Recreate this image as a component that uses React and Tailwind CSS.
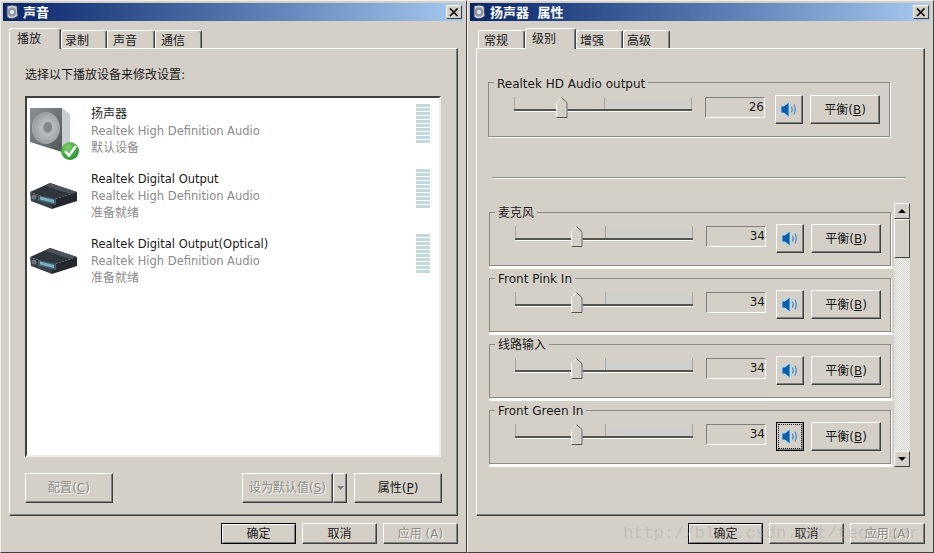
const FONT = "font-['DejaVu_Sans','Noto_Sans_CJK_SC',sans-serif]";

function Raised({ className = '', children }) {
  return (
    <div className={`flex items-center justify-center border border-t-white border-l-white border-r-[#404040] border-b-[#404040] shadow-[inset_-1px_-1px_0_#808080] ${className}`}>
      {children}
    </div>
  );
}

function Label({ text, hot, disabled }) {
  // disabled captions are grey with a white emboss
  const color = disabled ? 'text-[#8c8a84] [text-shadow:1px_1px_0_#fff]' : 'text-[#1a1a1a]';
  return (
    <span className={`text-[12px] leading-none ${color}`}>
      {text}
      {hot && (
        <>
          (<span className="underline">{hot}</span>)
        </>
      )}
    </span>
  );
}

function TitleIcon() {
  return (
    <svg width="15" height="16" viewBox="0 0 15 16">
      <path d="M2 2 Q7 0 12 2 L13 12 Q7 17 2 13 Z" fill="#c9ced6" stroke="#39435c" />
      <circle cx="7" cy="8" r="4.5" fill="#8f97a3" />
      <circle cx="7" cy="8" r="2" fill="#e6e9ee" />
    </svg>
  );
}

function TitleBar({ title, icon }) {
  return (
    <div className="flex h-[18px] w-[460px] items-center bg-linear-to-r from-[#0a246a] to-[#a6caf0] pl-[2px] pr-[1px]">
      {icon}
      <span className="ml-[3px] text-[13px] leading-none font-bold text-white [word-spacing:4px]">{title}</span>
      <div className="ml-auto flex h-[14px] w-[16px] items-center justify-center border border-t-white border-l-white border-r-[#404040] border-b-[#404040] bg-[#d4d0c8]">
        <svg width="10" height="9" viewBox="0 0 10 9">
          <path d="M1 0.5 L8.5 8 M8.5 0.5 L1 8" stroke="#000" strokeWidth="1.6" fill="none" />
        </svg>
      </div>
    </div>
  );
}

function Tabs({ items, active, left }) {
  return (
    <div className={`flex h-[20px] items-end ${left}`}>
      {items.map(([name, w, pad], i) =>
        i === active ? (
          <div
            key={name}
            style={{ width: w, paddingLeft: pad }}
            className="relative z-10 -mb-px flex h-[21px] items-start justify-start rounded-t-[3px] border border-b-0 border-t-white border-l-white border-r-[#404040] bg-[#d4d0c8] pt-[4px] text-[12px] leading-none text-[#1a1a1a] shadow-[inset_-1px_0_0_#808080]"
          >
            {name}
          </div>
        ) : (
          <div
            key={name}
            style={{ width: w, paddingLeft: pad }}
            className="flex h-[18px] items-start rounded-t-[3px] border border-b-0 border-t-white border-l-white border-r-[#404040] bg-[#d4d0c8] pt-[4px] text-[12px] leading-none text-[#1a1a1a] shadow-[inset_-1px_0_0_#808080]"
          >
            {name}
          </div>
        ),
      )}
    </div>
  );
}

function Footer() {
  return (
    <div className="flex justify-end gap-[6px] pt-[7px] pr-[6px]">
      <div className="flex h-[21px] w-[75px] items-center justify-center border border-black shadow-[inset_1px_1px_0_#fff,inset_-1px_-1px_0_#808080]">
        <Label text="确定" />
      </div>
      <Raised className="h-[21px] w-[75px]">
        <Label text="取消" />
      </Raised>
      <Raised className="h-[21px] w-[75px]">
        <Label text="应用 (A)" disabled />
      </Raised>
    </div>
  );
}

function Window({ title, tabs, active, tabsLeft, children, icon }) {
  return (
    <div className={`flex h-[553px] w-[467px] flex-col border border-t-[#f1efe9] border-r-[#404040] border-b-[#404040] border-l-[#f1efe9] bg-[#d4d0c8] p-[2px] ${FONT}`}>
      <TitleBar title={title} icon={icon} />
      <div className="mt-[7px]">
        <Tabs items={tabs} active={active} left={tabsLeft} />
      </div>
      <div className="ml-[6px] h-[468px] w-[449px] shrink-0 border border-t-white border-r-[#404040] border-b-[#404040] border-l-white shadow-[inset_-1px_-1px_0_#808080]">
        {children}
      </div>
      <Footer />
    </div>
  );
}

function SpeakerIcon() {
  return (
    <svg width="52" height="56" viewBox="0 0 52 56">
      <defs>
        <linearGradient id="faceG" x1="0" y1="0" x2="1" y2="1">
          <stop offset="0" stopColor="#8b9195" />
          <stop offset="1" stopColor="#4f5559" />
        </linearGradient>
        <radialGradient id="coneG" cx="0.55" cy="0.5" r="0.6">
          <stop offset="0" stopColor="#666c70" />
          <stop offset="0.35" stopColor="#b9bdbf" />
          <stop offset="0.85" stopColor="#989da0" />
          <stop offset="1" stopColor="#d6d9da" />
        </radialGradient>
        <radialGradient id="checkG" cx="0.4" cy="0.3" r="0.8">
          <stop offset="0" stopColor="#7fd26a" />
          <stop offset="1" stopColor="#1d8a2a" />
        </radialGradient>
      </defs>
      <polygon points="32,2 40,8 40,41 32,46" fill="#c9ced1" />
      <polygon points="0,2 32,2 32,46 0,36" fill="url(#faceG)" />
      <ellipse cx="16" cy="22" rx="14" ry="16" fill="url(#coneG)" />
      <ellipse cx="18" cy="21" rx="4" ry="5" fill="#80868a" />
      <circle cx="40" cy="45" r="9" fill="url(#checkG)" />
      <path d="M35 45 L39 49.5 L46 40" stroke="#fff" strokeWidth="2.4" fill="none" />
    </svg>
  );
}

function DeviceIcon() {
  return (
    <svg width="50" height="27" viewBox="0 0 50 27">
      <polygon points="0,9 20,0 47,9 22,17" fill="#2f353b" />
      <polygon points="20,0 47,9 40,11 16,3" fill="#4b5259" />
      <polygon points="0,9 22,17 22,26 1,18" fill="#383f45" />
      <polygon points="22,17 47,9 47,18 22,26" fill="#25292e" />
      <polygon points="8,12 26,16 26,22 8,18" fill="#44606e" />
      <polygon points="10,13.5 24,17 24,20 10,16.5" fill="#7fb0c0" />
      <circle cx="4" cy="14" r="2.5" fill="#6f7479" />
    </svg>
  );
}

function Meter() {
  return (
    <div className="flex w-[14px] flex-col gap-px">
      {Array.from({ length: 10 }).map((_, i) => (
        <div key={i} className="h-[3px] bg-[#c4d9dc]" />
      ))}
    </div>
  );
}

function Device({ name, nameSize, status, icon }) {
  return (
    <div className="flex h-[65px] items-start pt-[6px]">
      <div className="flex h-[56px] w-[64px] shrink-0 items-start pl-[3px]">{icon}</div>
      <div className="flex-1 leading-[17px]">
        <div className={`text-[#1a1a1a] ${nameSize}`}>{name}</div>
        <div className="text-[11.5px] text-[#8a8a8a]">Realtek High Definition Audio</div>
        <div className="text-[12px] text-[#8a8a8a]">{status}</div>
      </div>
      <div className="mr-[9px] -mt-[2px]">
        <Meter />
      </div>
    </div>
  );
}

function Playback() {
  return (
    <div className="flex h-full flex-col px-[15px] pt-[18px]">
      <div className="text-[12px] leading-[16px] text-[#1a1a1a]">选择以下播放设备来修改设置:</div>
      <div className="mt-[13px] h-[361px] w-[416px] border-2 border-t-[#404040] border-r-[#eeece6] border-b-[#eeece6] border-l-[#404040] bg-white pt-[2px]">
        <Device name="扬声器" nameSize="text-[12px]" status="默认设备" icon={<SpeakerIcon />} />
        <Device name="Realtek Digital Output" nameSize="text-[11.5px]" status="准备就绪" icon={<div className="pt-[12px]"><DeviceIcon /></div>} />
        <Device name="Realtek Digital Output(Optical)" nameSize="text-[11.5px]" status="准备就绪" icon={<div className="pt-[12px]"><DeviceIcon /></div>} />
      </div>
      <div className="mt-[16px] flex w-[417px] items-start">
        <Raised className="h-[30px] w-[88px]">
          <Label text="配置" hot="C" disabled />
        </Raised>
        <Raised className="ml-auto h-[30px] w-[91px]">
          <Label text="设为默认值" hot="S" disabled />
        </Raised>
        <Raised className="h-[30px] w-[14px]">
          <svg width="7" height="4" viewBox="0 0 7 4">
            <path d="M0 0 H7 L3.5 4 Z" fill="#808080" />
          </svg>
        </Raised>
        <Raised className="ml-[7px] h-[30px] w-[88px]">
          <Label text="属性" hot="P" />
        </Raised>
      </div>
    </div>
  );
}

function Slider({ pos }) {
  return (
    <div className="relative h-[22px] w-[178px] shrink-0">
      <div className="absolute top-[2px] right-0 left-[90px] h-[11px] bg-[#cfcfcb]" />
      <div className="absolute top-0 left-0 h-[13px] w-px bg-[#a8a6a0]" />
      <div className="absolute top-0 left-[90px] h-[13px] w-px bg-[#a8a6a0]" />
      <div className="absolute top-0 right-0 h-[13px] w-px bg-[#a8a6a0]" />
      <div className="absolute top-[12px] right-0 left-0 h-[3px] border-b border-b-white bg-[#55534e]" />
      <svg className="absolute top-0" style={{ left: pos }} width="12" height="21" viewBox="0 0 12 21">
        <path d="M0.5 20.5 V5.5 L5.5 0.5 L11 5.5 V20.5 Z" fill="#d4d0c8" stroke="#fff" />
        <path d="M5.5 0.5 L11 5.5 V20.5 H0.5" fill="none" stroke="#55534e" />
      </svg>
    </div>
  );
}

function VolumeIcon() {
  return (
    <svg width="18" height="17" viewBox="0 0 18 17">
      <path d="M1 5 H4 L9 1 V16 L4 12 H1 Z" fill="#0b5cad" stroke="#a4e0f2" strokeWidth="0.9" />
      <path d="M11.5 5.5 Q13 8.5 11.5 11.5 M14 3.5 Q16.5 8.5 14 13.5" fill="none" stroke="#4a90c8" strokeWidth="1.2" />
    </svg>
  );
}

function Group({ title, value, pos, focused, top, height, legendTop }) {
  return (
    <div
      style={{ height, paddingTop: top }}
      className="relative w-[402px] shrink-0 border border-[#8c8a84] pl-[25px] shadow-[1px_1px_0_#fff]"
    >
      <span style={{ top: legendTop }} className="absolute left-[5px] bg-[#d4d0c8] px-[3px] text-[12px] leading-[16px] text-[#1a1a1a]">{title}</span>
      <div className="flex items-start">
        <div className="pt-[2px]">
          <Slider pos={pos} />
        </div>
        <div className="mt-[2px] ml-[13px] flex h-[21px] w-[60px] items-start justify-end border border-t-[#808080] border-r-white border-b-white border-l-[#808080] text-[12px] leading-[19px] text-[#1a1a1a]">
          {value}
        </div>
        {focused ? (
          <div className="ml-[10px] flex h-[29px] w-[28px] items-center justify-center border border-black p-[1px] shadow-[inset_-1px_-1px_0_#808080]">
            <div className="flex h-full w-full items-center justify-center border border-dotted border-black">
              <VolumeIcon />
            </div>
          </div>
        ) : (
          <Raised className="ml-[10px] h-[29px] w-[28px]">
            <VolumeIcon />
          </Raised>
        )}
        <Raised className="ml-[7px] h-[29px] w-[70px]">
          <Label text="平衡" hot="B" />
        </Raised>
      </div>
    </div>
  );
}

function ScrollRow({ title, value, focused }) {
  return (
    <div className="h-[66px] shrink-0">
      <Group title={title} value={value} pos={56} focused={focused} top={11} height={54} legendTop={-8} />
      <div className="mt-px h-[2px] w-[404px] bg-white" />
    </div>
  );
}

function ScrollBar() {
  const arrow = 'flex h-[16px] w-[16px] items-center justify-center border border-t-white border-l-white border-r-[#404040] border-b-[#404040] bg-[#d4d0c8]';
  return (
    <div className="flex h-[264px] w-[16px] flex-col bg-[repeating-conic-gradient(#cfccc5_0_25%,#fff_0_50%)] bg-size-[2px_2px]">
      <div className={arrow}>
        <svg width="8" height="4" viewBox="0 0 8 4"><path d="M4 0 L8 4 H0 Z" fill="#000" /></svg>
      </div>
      <div className="h-[39px] w-[16px] border border-t-white border-l-white border-r-[#404040] border-b-[#404040] bg-[#d4d0c8]" />
      <div className={`${arrow} mt-auto`}>
        <svg width="8" height="4" viewBox="0 0 8 4"><path d="M0 0 H8 L4 4 Z" fill="#000" /></svg>
      </div>
    </div>
  );
}

function Levels() {
  return (
    <div className="flex h-full flex-col pt-[33px] pl-[11px]">
      <Group title="Realtek HD Audio output" value="26" pos={42} top={12} height={55} legendTop={-7} />
      <div className="mt-[40px] ml-[4px] h-[2px] w-[414px] border-b border-b-white bg-[#8c8a84]" />
      <div className="mt-[24px] ml-px flex items-start gap-[1px]">
        <div className="flex h-[264px] w-[404px] flex-col pt-[9px]">
          <ScrollRow title="麦克风" value="34" />
          <ScrollRow title="Front Pink In" value="34" />
          <ScrollRow title="线路输入" value="34" />
          <ScrollRow title="Front Green In" value="34" focused />
        </div>
        <ScrollBar />
      </div>
    </div>
  );
}

export default function App() {
  return (
    <div className="relative flex h-[553px] w-[934px] overflow-hidden bg-[#d4d0c8]">
      <Window
        title="声音"
        icon={<TitleIcon />}
        tabs={[['播放', 52, 7], ['录制', 46, 3], ['声音', 48, 5], ['通信', 47, 5]]}
        active={0}
        tabsLeft="pl-[6px]"
      >
        <Playback />
      </Window>
      <Window
        title="扬声器 属性"
        icon={<TitleIcon />}
        tabs={[['常规', 47, 5], ['级别', 51, 6], ['增强', 47, 3], ['高级', 47, 3]]}
        active={1}
        tabsLeft="pl-[8px]"
      >
        <Levels />
      </Window>
      {/* blog watermark over the dialog */}
      <span className="pointer-events-none absolute top-[524px] left-[623px] font-['Liberation_Mono',monospace] text-[17px] leading-[20px] whitespace-nowrap text-[#a8a6a0]/40">
        http://blog.csdn.net/tech_ger
      </span>
    </div>
  );
}
